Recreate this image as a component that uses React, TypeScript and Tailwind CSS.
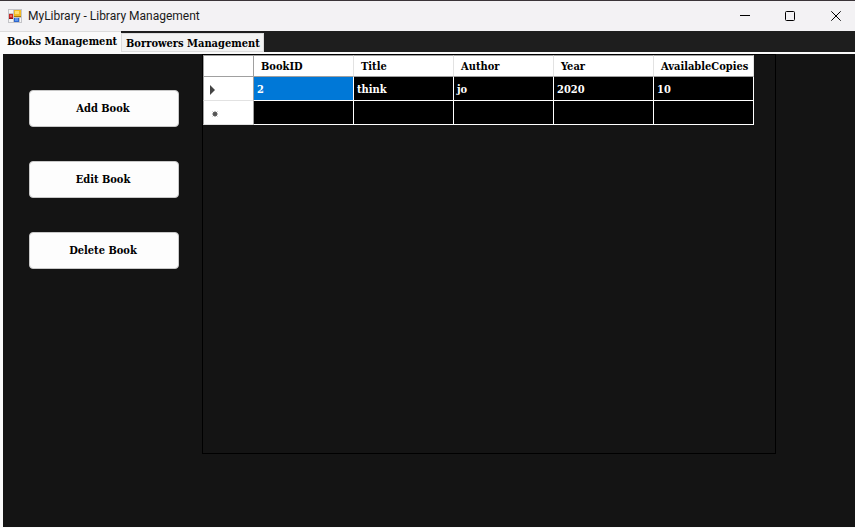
import { useState } from "react";

const columns = ["BookID", "Title", "Author", "Year", "AvailableCopies"];
const rows = [
  ["2", "think", "jo", "2020", "10"],
  ["", "", "", "", ""],
];
const actions = ["Add Book", "Edit Book", "Delete Book"];

function AppIcon() {
  return (
    <svg width="14" height="14" viewBox="0 0 14 14" aria-hidden="true" shapeRendering="crispEdges">
      <rect width="14" height="14" fill="#c4c4c8" />
      <rect x="1" y="1" width="4" height="3" fill="#f4f4f4" />
      <rect x="1" y="10" width="4" height="3" fill="#f4f4f4" />
      <rect x="12" y="9" width="1" height="4" fill="#f4f4f4" />
      <rect x="1" y="5" width="4" height="5" fill="#8c1414" />
      <rect x="1" y="5" width="4" height="4" fill="#c62828" />
      <rect x="2" y="6" width="2" height="2" fill="#ef6a5a" />
      <rect x="6" y="1" width="7" height="7" fill="#a87808" />
      <rect x="6" y="1" width="7" height="6" fill="#f2bc26" />
      <rect x="7" y="2" width="4" height="3" fill="#fddf74" />
      <rect x="6" y="9" width="5" height="4" fill="#2f66cc" />
      <rect x="7" y="9" width="3" height="3" fill="#5a96f0" />
    </svg>
  );
}

function TitleBar() {
  return (
    <header className="flex h-[31px] items-center border-t border-[#3a3438] bg-[#f3f2f4] pl-2 font-['Roboto','Noto_Sans',sans-serif]">
      <AppIcon />
      <h1 className="flex-1 pl-[6px] text-[12px] leading-4 text-[#1a1a1a]">MyLibrary - Library Management</h1>
      <div className="flex">
        <button type="button" aria-label="Minimize" className="flex h-7 w-[45px] items-center justify-center">
          <svg width="10" height="10" viewBox="0 0 10 10" aria-hidden="true">
            <path d="M0 4.5H10" stroke="#000" />
          </svg>
        </button>
        <button type="button" aria-label="Maximize" className="flex h-7 w-[45px] items-center justify-center">
          <svg width="10" height="10" viewBox="0 0 10 10" aria-hidden="true">
            <rect x="0.5" y="0.5" width="9" height="9" rx="1" fill="none" stroke="#000" />
          </svg>
        </button>
        <button type="button" aria-label="Close" className="flex h-7 w-[43px] items-center justify-center pl-[5px]">
          <svg width="10" height="10" viewBox="0 0 10 10" aria-hidden="true">
            <path d="M0.3 0.3L9.7 9.7M9.7 0.3L0.3 9.7" stroke="#000" />
          </svg>
        </button>
      </div>
    </header>
  );
}

function RowMarker({ current }: { current: boolean }) {
  return current ? (
    <svg width="5" height="10" viewBox="0 0 5 10" aria-hidden="true">
      <path d="M0 0L5 5L0 10Z" fill="#444" />
    </svg>
  ) : (
    <svg className="ml-[2px]" width="6" height="6" viewBox="0 0 6 6" aria-hidden="true">
      <circle cx="3" cy="3" r="2" fill="#444" />
      <path d="M3 0V6M0 3H6M0.7 0.7L5.3 5.3M5.3 0.7L0.7 5.3" stroke="#555" strokeWidth="0.8" />
    </svg>
  );
}

function BooksTable() {
  return (
    <table className="w-[551px] table-fixed border-separate border-spacing-0 text-left">
      <thead>
        <tr className="h-[22px] bg-white text-black">
          <th aria-label="Row" className="w-[51px] border border-[#a0a0a0] p-0" />
          {columns.map((name) => (
            <th
              key={name}
              scope="col"
              className="border-y border-r border-t-[#a0a0a0] border-r-[#e2e2e2] border-b-[#a0a0a0] p-0 pt-[2px] pl-[7px] leading-4 font-bold"
            >
              {name}
            </th>
          ))}
        </tr>
      </thead>
      <tbody>
        {rows.map((row, r) => (
          <tr key={r} className="h-6 bg-black text-white">
            <th
              scope="row"
              aria-label={r === 0 ? "Current row" : "New row"}
              className="border-x border-b border-x-[#a0a0a0] border-b-[#e2e2e2] bg-white p-0 pt-[2px] pl-[6px]"
            >
              <RowMarker current={r === 0} />
            </th>
            {row.map((value, c) => (
              <td
                key={c}
                className={
                  r === 0 && c === 0
                    ? "border-r border-b border-white bg-[#0078d7] p-0 pt-[2px] pl-[3px] leading-4"
                    : "border-r border-b border-white p-0 pt-[2px] pl-[3px] leading-4"
                }
              >
                {value}
              </td>
            ))}
          </tr>
        ))}
      </tbody>
    </table>
  );
}

export default function App() {
  const [tab, setTab] = useState("books");
  return (
    <div className="flex min-h-screen flex-col bg-[#fafafa] font-['DejaVu_Serif_Condensed','DejaVu_Serif',serif] text-[11px] font-bold">
      <div className="font-normal">
        <TitleBar />
      </div>
      <div role="tablist" className="flex h-[21px] items-end bg-[#1e1e1e] text-black">
        <button
          type="button"
          role="tab"
          aria-selected={tab === "books"}
          onClick={() => setTab("books")}
          className="h-[21px] w-[121px] border-t border-[#dcdcdc] bg-[#fafafa] pl-[7px] text-left leading-4 whitespace-nowrap"
        >
          Books Management
        </button>
        <button
          type="button"
          role="tab"
          aria-selected={tab === "borrowers"}
          onClick={() => setTab("borrowers")}
          className="h-[19px] w-[143px] border border-[#dcdcdc] bg-[#f3f3f3] pt-[2px] pl-1 text-left leading-4 whitespace-nowrap"
        >
          Borrowers Management
        </button>
      </div>
      <main className="mt-[2px] mb-px ml-[3px] flex flex-1 items-start bg-[#141414]">
        <div className="flex w-[199px] shrink-0 flex-col gap-[34px] pt-9 pr-[23px] pl-[26px]">
          {actions.map((label) => (
            <button
              key={label}
              type="button"
              className="h-[37px] rounded-[4px] border border-[#c8c8c8] bg-[#fdfdfd] pr-[2px] leading-4 text-black"
            >
              {label}
            </button>
          ))}
        </div>
        <section aria-label="Books" className="mr-[79px] min-h-[400px] flex-1 border border-black">
          <BooksTable />
        </section>
      </main>
    </div>
  );
}
